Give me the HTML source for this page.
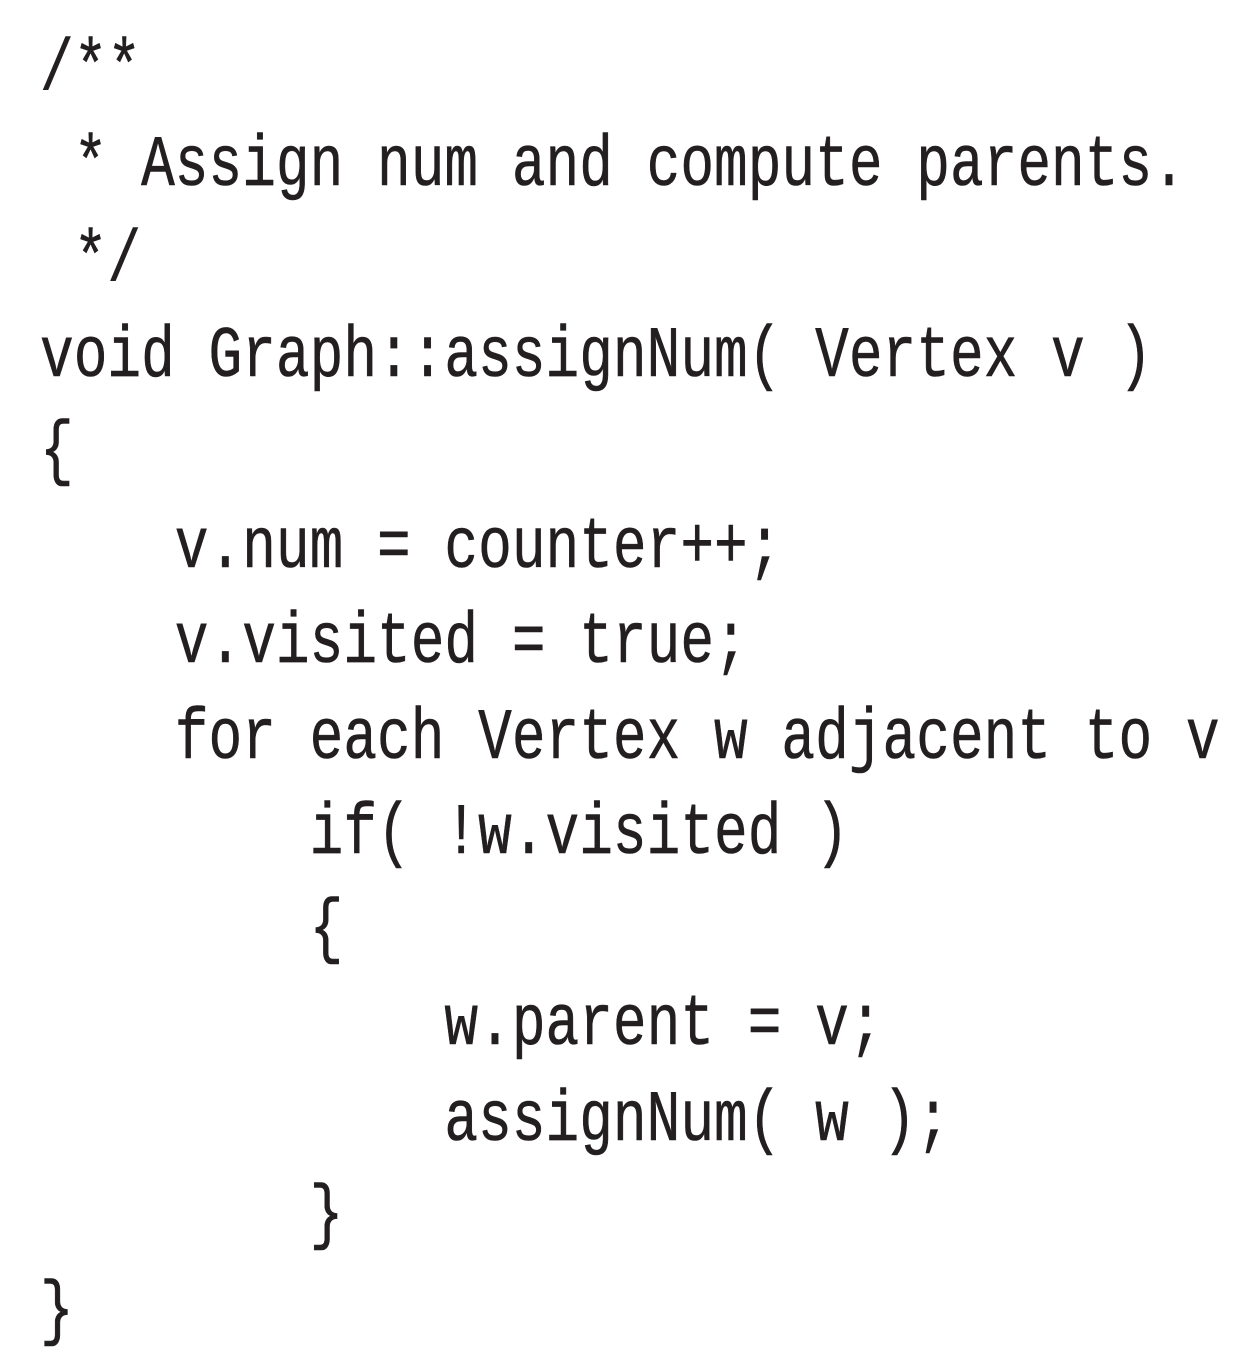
<!DOCTYPE html>
<html><head><meta charset="utf-8"><style>
html,body{margin:0;padding:0;background:#fff;width:1246px;height:1354px;overflow:hidden}
pre{position:absolute;left:40px;top:23px;margin:0;font-family:"Liberation Mono",monospace;font-size:72px;line-height:95.5px;color:#231f20;transform:scaleX(0.78);transform-origin:0 0;letter-spacing:0;-webkit-text-stroke:0.6px #231f20}
</style></head><body>
<pre>/**
 * Assign num and compute parents.
 */
void Graph::assignNum( Vertex v )
{
    v.num = counter++;
    v.visited = true;
    for each Vertex w adjacent to v
        if( !w.visited )
        {
            w.parent = v;
            assignNum( w );
        }
}</pre>
</body></html>
